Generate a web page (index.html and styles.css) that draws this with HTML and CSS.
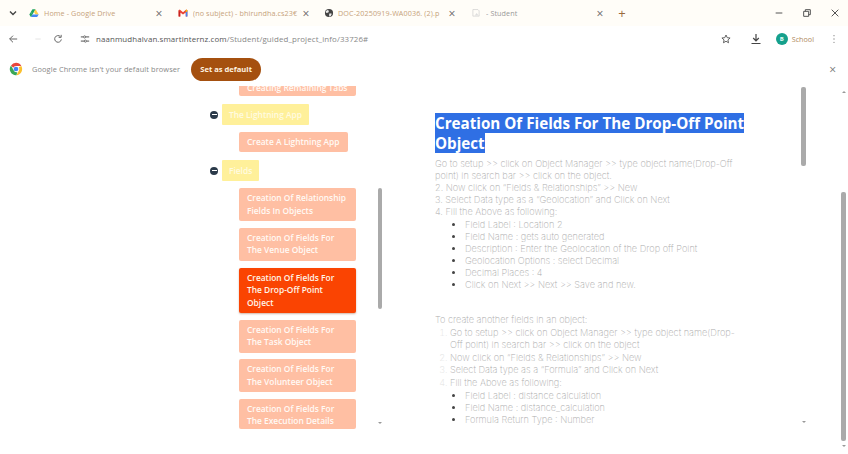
FILE: index.html
```html
<!DOCTYPE html>
<html lang="en">
<head>
<meta charset="utf-8">
<title>Student</title>
<link rel="stylesheet" href="styles.css">
</head>
<body>
<div class="tabstrip">
  <svg class="chev" viewBox="0 0 10 10"><path d="M2 3.500l3 3 3-3" fill="none" stroke="#444" stroke-width="1.400"/></svg>
  <div class="tab tab-drive">
    <svg class="favicon" viewBox="0 0 16 16"><path d="M5.500 2h5l-5 8.500-2.600-4.300z" fill="#1fa463"/><path d="M10.500 2l5 8.500h-5L8 6.200z" fill="#ffd04b"/><path d="M5.500 10.500h10L13 14.500H3z" fill="#4688f4"/><path d="M.5 10.500L3 6.300l2.500 4.200L3 14.500z" fill="#1fa463"/></svg>
    <span class="tab-title warm">Home - Google Drive</span>
    <span class="tab-close">×</span>
  </div>
  <div class="tab tab-mail">
    <svg class="favicon" viewBox="0 0 16 16"><path d="M1 3.500v10h2.600V7L8 10.300 12.400 7v6.500H15v-10l-1.800-1L8 6.600 2.800 2.500z" fill="#ea4335"/><path d="M12.400 7V13.500H15V3.500z" fill="#4285f4"/><path d="M1 3.500v10h2.600V7z" fill="#c5221f"/><path d="M12.400 3.700v3.300L15 5V3.500L13.500 2.500z" fill="#fbbc04"/></svg>
    <span class="tab-title warm">(no subject) - bhirundha.cs23€</span>
    <span class="tab-close">×</span>
  </div>
  <div class="tab tab-doc">
    <svg class="favicon" viewBox="0 0 16 16"><circle cx="8" cy="8" r="6.500" fill="#444"/><path d="M5 3l3 1.500L7 7 4 8 2.500 6zM9 8.500l3.500.5-1.500 3.500-2 1.500-1-3z" fill="#eee"/></svg>
    <span class="tab-title warm">DOC-20250919-WA0036. (2).p</span>
    <span class="tab-close">×</span>
  </div>
  <div class="tab tab-student">
    <svg class="favicon" viewBox="0 0 16 16"><path d="M3 2.500h8l2 2V13H3z" fill="none" stroke="#c9c9c9"/><path d="M6 12l3-4 3 4z" fill="#ddd"/></svg>
    <span class="tab-title">- Student</span>
    <span class="tab-close">×</span>
  </div>
  <span class="newtab">+</span>
  <div class="winctl">
    <svg viewBox="0 0 12 12"><path d="M2 6h8" stroke="#555" stroke-width="1.200"/></svg>
    <svg viewBox="0 0 12 12"><path d="M2 4h6v6H2zM4 4V2h6v6H8" fill="none" stroke="#555" stroke-width="1.200"/></svg>
    <svg viewBox="0 0 12 12"><path d="M2 2l8 8M10 2l-8 8" stroke="#555" stroke-width="1.200"/></svg>
  </div>
</div>

<div class="toolbar">
  <svg class="tool tool-back" viewBox="0 0 12 12"><path d="M11 6H2M6 2L2 6l4 4" fill="none" stroke="#666" stroke-width="1.200"/></svg>
  <svg class="tool tool-forward" viewBox="0 0 12 12"><path d="M2 6h8" stroke="#ddd" stroke-width="1.200"/></svg>
  <svg class="tool tool-reload" viewBox="0 0 12 12"><path d="M10 6.500A4 4 0 1 1 8.800 3M9.800 1v3h-3" fill="none" stroke="#666" stroke-width="1.200"/></svg>
  <svg class="tool tool-tune" viewBox="0 0 12 12"><path d="M1 3.500h3M7 3.500h4M1 8.500h4M8 8.500h3" stroke="#555" stroke-width="1.200"/><circle cx="5.500" cy="3.500" r="1.300" fill="none" stroke="#555"/><circle cx="6.500" cy="8.500" r="1.300" fill="none" stroke="#555"/></svg>
  <div class="url"><span class="url-host">naanmudhalvan.smartinternz.com</span>/Student/guided_project_info/33726#</div>
  <svg class="tool tool-star" viewBox="0 0 12 12"><path d="M6 1.200l1.450 3.200 3.450.4-2.600 2.300.75 3.400L6 8.700l-3.050 1.800.75-3.400L1.100 4.800l3.450-.4z" fill="none" stroke="#555" stroke-width="1.100"/></svg>
  <svg class="tool tool-download" viewBox="0 0 12 12"><path d="M6 1v6.500M3.200 5L6 7.800 8.800 5M1.500 10.500h9" fill="none" stroke="#444" stroke-width="1.200"/></svg>
  <div class="profile"><span class="avatar">B</span><span class="profile-name">School</span></div>
  <svg class="tool tool-menu" viewBox="0 0 4 12"><circle cx="2" cy="2" r=".8" fill="#888"/><circle cx="2" cy="6" r=".8" fill="#888"/><circle cx="2" cy="10" r=".8" fill="#888"/></svg>
</div>

<div class="infobar">
  <svg class="chrome-logo" viewBox="0 0 16 16"><path d="M8 1a7 7 0 0 1 6.100 3.500H8A3.500 3.500 0 0 0 4.800 6.600L2.300 3.900A7 7 0 0 1 8 1z" fill="#e8453c"/><path d="M14.100 4.500A7 7 0 0 1 8.500 15l2.500-4.800a3.500 3.500 0 0 0 0-4.200z" fill="#fbc02d"/><path d="M2.300 3.900l3 5.500a3.500 3.500 0 0 0 4.200 2L8.500 15A7 7 0 0 1 2.300 3.900z" fill="#3aa757"/><circle cx="8" cy="8" r="2.700" fill="#4285f4"/></svg>
  <span class="info-text">Google Chrome isn't your default browser</span>
  <button class="info-btn">Set as default</button>
  <span class="info-close">×</span>
</div>

<main class="page">
  <nav class="sidebar">
    <div class="tree">
      <div class="item clipped"><span>Creating Remaining Tabs</span></div>
      <div class="group">
        <span class="minus"></span><span class="chip">The Lightning App</span>
      </div>
      <div class="item short">Create A Lightning App</div>
      <div class="group">
        <span class="minus"></span><span class="chip">Fields</span>
      </div>
      <div class="item">Creation Of Relationship Fields In Objects</div>
      <div class="item">Creation Of Fields For The Venue Object</div>
      <div class="item active">Creation Of Fields For The Drop-Off Point Object</div>
      <div class="item">Creation Of Fields For The Task Object</div>
      <div class="item">Creation Of Fields For The Volunteer Object</div>
      <div class="item">Creation Of Fields For The Execution Details</div>
    </div>
    <div class="sidebar-track">
      <span class="thumb thumb-side"></span>
      <span class="arrow-down"></span>
    </div>
  </nav>

  <article class="content">
    <h1 class="title"><span class="selected">Creation Of Fields For The Drop-Off Point Object</span></h1>
    <p class="line">Go to setup &gt;&gt; click on Object Manager &gt;&gt; type object name(Drop-Off point) in search bar &gt;&gt; click on the object.</p>
    <p class="line">2. Now click on “Fields &amp; Relationships” &gt;&gt; New</p>
    <p class="line">3. Select Data type as a “Geolocation” and Click on Next</p>
    <p class="line">4. Fill the Above as following:</p>
    <ul class="bullets first-bullets">
      <li>Field Label : Location 2</li>
      <li>Field Name : gets auto generated</li>
      <li>Description : Enter the Geolocation of the Drop off Point</li>
      <li>Geolocation Options : select Decimal</li>
      <li>Decimal Places : 4</li>
      <li>Click on Next &gt;&gt; Next &gt;&gt; Save and new.</li>
    </ul>
    <p class="line second-intro">To create another fields in an object:</p>
    <ol class="steps">
      <li>Go to setup &gt;&gt; click on Object Manager &gt;&gt; type object name(Drop-Off point) in search bar &gt;&gt; click on the object</li>
      <li>Now click on “Fields &amp; Relationships” &gt;&gt; New</li>
      <li>Select Data type as a “Formula” and Click on Next</li>
      <li>Fill the Above as following:</li>
    </ol>
    <ul class="bullets last-bullets">
      <li>Field Label : distance calculation</li>
      <li>Field Name : distance_calculation</li>
      <li>Formula Return Type : Number</li>
    </ul>
  </article>

  <div class="content-track">
    <span class="thumb thumb-content"></span>
    <span class="arrow-down"></span>
  </div>

  <div class="page-track">
    <span class="arrow-up"></span>
    <span class="thumb thumb-page"></span>
    <span class="arrow-down"></span>
  </div>
</main>
</body>
</html>
```

FILE: styles.css
```css
* { box-sizing: border-box; }
html, body { margin: 0; height: 100%; overflow: hidden; background: #fff; }
body { width: 848px; height: 454px; font-family: "Open Sans", sans-serif; display: flex; flex-direction: column; }

.tabstrip { height: 26px; background: #fffdf8; display: flex; align-items: center; font-size: 7.200px; color: #999; flex: none; }
.chev { width: 10px; height: 10px; margin-left: 8px; margin-right: 11px; flex: none; }
.tab { display: flex; align-items: center; height: 100%; flex: none; }
.favicon { width: 10px; height: 10px; flex: none; margin-right: 5px; }
.tab-title { flex: 1; white-space: nowrap; overflow: hidden; letter-spacing: .1px; }
.warm { color: #c6a27a; }
.tab-close { color: #666; font-size: 12px; width: 10px; text-align: center; }
.tab-drive { width: 135px; margin-right: 14px; }
.tab-mail { width: 133px; margin-right: 13px; }
.tab-doc { width: 133px; margin-right: 14px; }
.tab-student { width: 134px; margin-right: 10px; }
.tab-doc .favicon { margin-right: 4px; }
.newtab { font-size: 13px; color: #9a6a3a; width: 14px; text-align: center; }
.winctl { margin-left: auto; display: flex; gap: 18px; padding-right: 8px; }
.winctl svg { width: 10px; height: 10px; }

.toolbar { height: 26px; display: flex; align-items: center; flex: none; background: #fff; }
.tool { height: 10px; width: 10px; flex: none; }
.tool-back { margin-left: 8px; }
.tool-forward { margin-left: 16px; width: 8px; }
.tool-reload { margin-left: 11px; }
.tool-tune { margin-left: 17px; }
.url { margin-left: 6px; font-size: 7.900px; color: #888; letter-spacing: .12px; white-space: nowrap; }
.url-host { color: #555; }
.tool-star { margin-left: auto; }
.tool-download { margin-left: 19px; height: 12px; width: 12px; }
.profile { display: flex; align-items: center; gap: 4px; margin-left: 14px; }
.avatar { width: 12px; height: 12px; border-radius: 50%; background: #15a08c; color: #e6fff8; font-size: 6px; font-weight: 700; display: flex; align-items: center; justify-content: center; }
.profile-name { font-size: 7.200px; color: #b08a60; }
.tool-menu { margin-left: 18px; margin-right: 12px; width: 4px; }

.infobar { height: 34px; display: flex; align-items: center; flex: none; background: #fff; padding-left: 9px; }
.chrome-logo { width: 14px; height: 14px; flex: none; }
.info-text { margin-left: 9px; font-size: 7.400px; color: #888; letter-spacing: .1px; }
.info-btn { margin-left: 11px; width: 70px; height: 23px; border: 0; border-radius: 12px; background: #a5500f; color: #fff3e0; font: 700 7.600px "Open Sans", sans-serif; padding: 0; }
.info-close { margin-left: auto; margin-right: 12px; color: #777; font-size: 12px; }

.page { flex: 1; display: flex; min-height: 0; background: #fff; }

.sidebar { width: 382px; height: 343px; padding-left: 210px; flex: none; display: flex; }
.tree { width: 168px; display: flex; flex-direction: column; overflow: hidden; }
.item { margin-left: 29px; width: 117px; flex: none; background: #ffbfa3; color: #fffaf5; border-radius: 2px; padding: 4px 8px; font-size: 8.400px; line-height: 12.500px; font-weight: 600; margin-bottom: 6.500px; }
.item:last-child { height: 30px; overflow: hidden; margin-bottom: 0; }
.clipped { height: 10px; padding: 0 8px; margin-bottom: 8px; overflow: hidden; border-radius: 0 0 2px 2px; line-height: 4px; white-space: nowrap; }
.short { width: 109px; height: 20px; margin-bottom: 8px; white-space: nowrap; }
.active { background: #fa4402; color: #fff6ea; box-shadow: 0 1px 2px rgba(120, 40, 0, .35); margin-top: .500px; }
.group { display: flex; align-items: center; height: 21px; margin-bottom: 7px; flex: none; }
.minus { width: 8px; height: 8px; border-radius: 50%; background: #2b3a4a; position: relative; margin-right: 4px; flex: none; }
.minus::after { content: ""; position: absolute; left: 1.500px; right: 1.500px; top: 3.500px; height: 1px; background: #fff; }
.chip { background: #fff09a; color: #fffbe0; font-size: 8.400px; font-weight: 600; height: 100%; padding: 0 7px; line-height: 21px; border-radius: 1px; }

.sidebar-track { width: 4px; height: 343px; flex: none; }
.thumb { display: block; background: #aaa; border-radius: 2px; }
.thumb-side { width: 4px; height: 121px; margin-top: 102px; }
.arrow-down, .arrow-up { display: block; width: 0; height: 0; margin-left: auto; margin-right: auto; border-left: 2px solid transparent; border-right: 2px solid transparent; }
.arrow-down { border-top: 2px solid #999; }
.arrow-up { border-bottom: 2px solid #999; }
.sidebar-track .arrow-down { margin-top: 113px; }

.content { width: 419px; flex: none; padding: 28px 56px 0 53px; color: #acacac; font-family: Inter, sans-serif; font-weight: 200; font-size: 9.200px; line-height: 12px; }
.title { margin: 0 0 5px; font-family: "Open Sans", sans-serif; font-size: 15.200px; line-height: 19.500px; font-weight: 700; color: #fff; letter-spacing: 0; }
.selected { background: #2f6fe4; }
.line { margin: 0; }
.bullets { margin: 1px 0 0; padding-left: 30px; }
.bullets li::marker { color: #444; }
.first-bullets { margin-bottom: 23px; }
.second-intro { margin-bottom: 1px; }
.steps { margin: 0; padding-left: 15px; }
.steps li { margin-bottom: .500px; }
.steps li::marker { color: #e2e2e2; }
.last-bullets { margin-top: 1.500px; }

.content-track { width: 5px; flex: none; margin-right: 35px; padding-top: 1px; }
.thumb-content { height: 79px; }
.content-track .arrow-down { margin-top: 255px; }
.page-track { width: 5px; flex: none; padding-top: 5px; }
.thumb-page { height: 249px; margin-top: 99px; }
.page-track .arrow-down { margin-top: 4px; }
```
